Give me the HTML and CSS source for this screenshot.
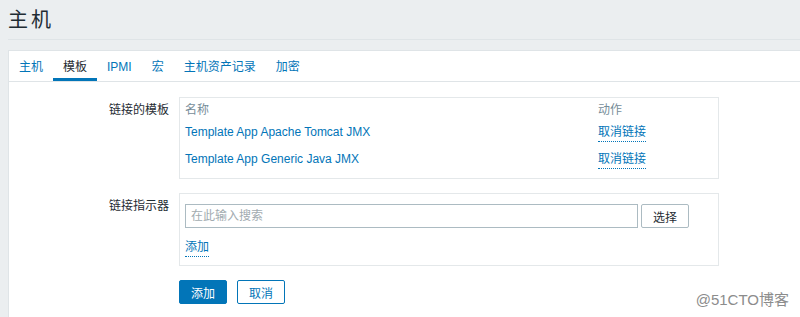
FILE: index.html
```html
<!DOCTYPE html>
<html lang="zh-CN">
<head>
    <meta charset="UTF-8">
    <title>主机</title>
    <link rel="stylesheet" href="styles.css">
</head>
<body>
    <header class="page-header">
        <h1>主机</h1>
    </header>

    <main class="panel">
        <ul class="tabs">
            <li><a href="#">主机</a></li>
            <li class="active"><a href="#">模板</a></li>
            <li><a href="#">IPMI</a></li>
            <li><a href="#">宏</a></li>
            <li><a href="#">主机资产记录</a></li>
            <li><a href="#">加密</a></li>
        </ul>

        <div class="form">
            <div class="form-row">
                <label class="form-label">链接的模板</label>
                <div class="form-box linked-box">
                    <table class="linked">
                        <tr>
                            <th class="col-name">名称</th>
                            <th>动作</th>
                        </tr>
                        <tr>
                            <td><a class="link" href="#">Template App Apache Tomcat JMX</a></td>
                            <td><a class="link-action" href="#">取消链接</a></td>
                        </tr>
                        <tr>
                            <td><a class="link" href="#">Template App Generic Java JMX</a></td>
                            <td><a class="link-action" href="#">取消链接</a></td>
                        </tr>
                    </table>
                </div>
            </div>

            <div class="form-row">
                <label class="form-label">链接指示器</label>
                <div class="form-box search-box">
                    <div class="search-row">
                        <input type="text" class="search-input" placeholder="在此输入搜索">
                        <button class="btn-grey">选择</button>
                    </div>
                    <div class="add-row">
                        <a class="link-action" href="#">添加</a>
                    </div>
                </div>
            </div>

            <div class="form-row buttons-row">
                <div class="form-label"></div>
                <div class="buttons">
                    <button class="btn-main">添加</button>
                    <button class="btn-alt">取消</button>
                </div>
            </div>
        </div>
    </main>

    <div class="watermark">@51CTO博客</div>
</body>
</html>
```

FILE: styles.css
```css
* {
    box-sizing: border-box;
    margin: 0;
    padding: 0;
}

body {
    font-family: "Liberation Sans", "Noto Sans CJK SC", sans-serif;
    font-size: 12px;
    line-height: 14px;
    color: #1f2c33;
    background-color: #ebeef0;
    overflow: hidden;
}

a {
    color: #0275b8;
    text-decoration: none;
}

/* Page title */
.page-header {
    padding-left: 8px;
}

.page-header h1 {
    height: 40px;
    padding-top: 8px;
    font-size: 20px;
    line-height: 24px;
    font-weight: normal;
    letter-spacing: 3px;
    border-bottom: 1px solid #dfe4e7;
    margin-bottom: 10px;
}

/* White panel */
.panel {
    margin-left: 8px;
    height: calc(100vh - 50px);
    background-color: #ffffff;
    border: 1px solid #dfe4e7;
    border-right: none;
    border-bottom: none;
}

.tabs {
    display: flex;
    list-style: none;
    border-bottom: 1px solid #dfe4e7;
}

.tabs a {
    display: block;
    padding: 9px 10px 4px;
    border-bottom: 3px solid transparent;
}

.tabs .active a {
    color: #1f2c33;
    border-bottom-color: #0275b8;
}

/* Form */
.form {
    padding-top: 15px;
}

.form-row {
    display: flex;
    margin-bottom: 14px;
}

.form-label {
    width: 170px;
    padding: 6px 10px 0 0;
    text-align: right;
}

.form-box {
    width: 540px;
    border: 1px solid #e4e8ea;
    padding: 5px;
}

.linked-box {
    padding-bottom: 7px;
}

.linked {
    width: 100%;
    border-collapse: collapse;
}

.linked th {
    text-align: left;
    font-weight: normal;
    color: #768d99;
    padding: 0;
}

.linked .col-name {
    width: 413px;
}

.linked td {
    padding: 8px 0 5px;
}

.link-action {
    padding-bottom: 2px;
    border-bottom: 1px dotted #0275b8;
}

.search-box {
    padding-bottom: 11px;
}

.search-row {
    display: flex;
    gap: 3px;
    margin-top: 5px;
}

.search-input {
    width: 453px;
    height: 24px;
    padding: 0 5px;
    border: 1px solid #acbbc2;
    font-family: inherit;
    font-size: 12px;
    color: #1f2c33;
}

.search-input::placeholder {
    color: #a2abb0;
}

.add-row {
    margin-top: 12px;
}

/* Buttons */
button {
    height: 24px;
    padding: 0 11px;
    font-family: inherit;
    font-size: 12px;
    border-radius: 2px;
    cursor: pointer;
}

.btn-grey {
    width: 48px;
    background-color: #ffffff;
    border: 1px solid #acbbc2;
    color: #1f2c33;
}

.buttons {
    display: flex;
    gap: 10px;
}

.btn-main {
    width: 48px;
    background-color: #0275b8;
    border: 1px solid #0275b8;
    color: #ffffff;
}

.btn-alt {
    width: 48px;
    background-color: #ffffff;
    border: 1px solid #0275b8;
    color: #0275b8;
}

.watermark {
    position: absolute;
    right: 11px;
    top: 291px;
    font-size: 15px;
    line-height: 18px;
    color: #8c8c8c;
}
```
